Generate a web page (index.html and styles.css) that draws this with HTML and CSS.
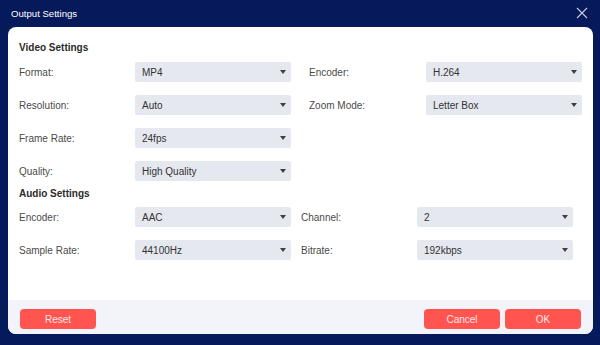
FILE: index.html
```html
<!DOCTYPE html>
<html>
<head>
<meta charset="utf-8">
<link rel="stylesheet" href="styles.css">
</head>
<body>
<div class="window">
  <div class="titlebar">
    <span class="title">Output Settings</span>
    <svg class="close" width="12" height="12" viewBox="0 0 12 12"><path d="M1 1L11 11M11 1L1 11" stroke="#c9cde0" stroke-width="1.1" fill="none"/></svg>
  </div>
  <div class="panel">
    <div class="content">
      <div class="heading">Video Settings</div>
      <div class="grid video">
        <div class="label">Format:</div>
        <div class="select">MP4<span class="arrow"></span></div>
        <div class="label">Encoder:</div>
        <div class="select">H.264<span class="arrow"></span></div>

        <div class="label">Resolution:</div>
        <div class="select">Auto<span class="arrow"></span></div>
        <div class="label">Zoom Mode:</div>
        <div class="select">Letter Box<span class="arrow"></span></div>

        <div class="label">Frame Rate:</div>
        <div class="select">24fps<span class="arrow"></span></div>
        <div></div><div></div>

        <div class="label">Quality:</div>
        <div class="select">High Quality<span class="arrow"></span></div>
        <div></div><div></div>
      </div>
      <div class="heading audio-heading">Audio Settings</div>
      <div class="grid audio">
        <div class="label">Encoder:</div>
        <div class="select">AAC<span class="arrow"></span></div>
        <div class="label">Channel:</div>
        <div class="select">2<span class="arrow"></span></div>

        <div class="label">Sample Rate:</div>
        <div class="select">44100Hz<span class="arrow"></span></div>
        <div class="label">Bitrate:</div>
        <div class="select">192kbps<span class="arrow"></span></div>
      </div>
    </div>
    <div class="footer">
      <button class="btn">Reset</button>
      <div class="spacer"></div>
      <button class="btn">Cancel</button>
      <button class="btn">OK</button>
    </div>
  </div>
</div>
</body>
</html>
```
FILE: styles.css
```css
html, body {
  margin: 0;
  padding: 0;
}
body {
  width: 600px;
  height: 345px;
  background: #06195b;
  font-family: "Liberation Sans", Arial, sans-serif;
  overflow: hidden;
}
.window {
  display: flex;
  flex-direction: column;
  height: 345px;
}
.titlebar {
  height: 27px;
  display: flex;
  align-items: center;
  padding: 0 12px 0 11px;
}
.title {
  color: #ffffff;
  font-size: 9.6px;
  flex: 1;
}
.close {
  display: block;
  margin-top: -1px;
}
.panel {
  margin: 0 7px 11px 8px;
  flex: 1;
  background: #ffffff;
  border-radius: 8px;
  display: flex;
  flex-direction: column;
  overflow: hidden;
}
.content {
  flex: 1;
  padding: 13px 0 0 11px;
}
.heading {
  font-size: 10px;
  font-weight: bold;
  color: #2b2b2b;
  line-height: 16px;
  height: 16px;
  margin-bottom: 6px;
}
.audio-heading {
  margin-top: 5px;
  margin-bottom: 5px;
}
.grid {
  display: grid;
  row-gap: 13px;
  align-items: center;
}
.video {
  grid-template-columns: 116px 156px 135px 156px;
}
.video .label:nth-child(4n+3) {
  margin-left: 18px;
}
.audio {
  grid-template-columns: 116px 156px 126px 156px;
}
.audio .label:nth-child(4n+3) {
  margin-left: 10px;
}
.label {
  font-size: 10px;
  color: #4a4a4a;
}
.select {
  height: 20px;
  background: #e5e8ef;
  border-radius: 2px;
  font-size: 10px;
  color: #333333;
  padding: 0 0 0 7px;
  display: flex;
  align-items: center;
  position: relative;
}
.arrow {
  position: absolute;
  right: 5px;
  top: 8px;
  width: 0;
  height: 0;
  border-left: 3.5px solid transparent;
  border-right: 3.5px solid transparent;
  border-top: 4px solid #3f3f3f;
}
.footer {
  height: 34px;
  background: #f2f4f9;
  display: flex;
  align-items: flex-start;
  padding: 9px 12px 0 12px;
  box-sizing: border-box;
  gap: 5px;
}
.spacer {
  flex: 1;
}
.btn {
  width: 76px;
  height: 20px;
  border: none;
  border-radius: 4px;
  background: #ff5450;
  color: #ffe9e8;
  font-family: "Liberation Sans", Arial, sans-serif;
  font-size: 10px;
  padding: 0;
}
```
